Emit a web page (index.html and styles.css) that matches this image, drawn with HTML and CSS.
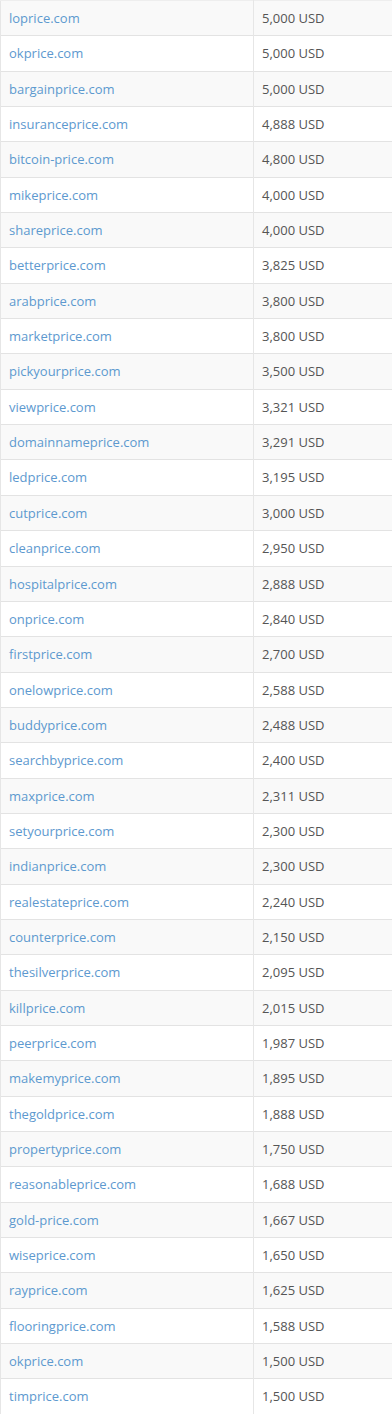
FILE: index.html
```html
<!DOCTYPE html>
<html>
<head>
<meta charset="utf-8">
<link rel="stylesheet" href="styles.css">
</head>
<body>
<table class="prices">
<tbody>
<tr><td class="dom"><a href="#">loprice.com</a></td><td class="amt">5,000 USD</td></tr>
<tr><td class="dom"><a href="#">okprice.com</a></td><td class="amt">5,000 USD</td></tr>
<tr><td class="dom"><a href="#">bargainprice.com</a></td><td class="amt">5,000 USD</td></tr>
<tr><td class="dom"><a href="#">insuranceprice.com</a></td><td class="amt">4,888 USD</td></tr>
<tr><td class="dom"><a href="#">bitcoin-price.com</a></td><td class="amt">4,800 USD</td></tr>
<tr><td class="dom"><a href="#">mikeprice.com</a></td><td class="amt">4,000 USD</td></tr>
<tr><td class="dom"><a href="#">shareprice.com</a></td><td class="amt">4,000 USD</td></tr>
<tr><td class="dom"><a href="#">betterprice.com</a></td><td class="amt">3,825 USD</td></tr>
<tr><td class="dom"><a href="#">arabprice.com</a></td><td class="amt">3,800 USD</td></tr>
<tr><td class="dom"><a href="#">marketprice.com</a></td><td class="amt">3,800 USD</td></tr>
<tr><td class="dom"><a href="#">pickyourprice.com</a></td><td class="amt">3,500 USD</td></tr>
<tr><td class="dom"><a href="#">viewprice.com</a></td><td class="amt">3,321 USD</td></tr>
<tr><td class="dom"><a href="#">domainnameprice.com</a></td><td class="amt">3,291 USD</td></tr>
<tr><td class="dom"><a href="#">ledprice.com</a></td><td class="amt">3,195 USD</td></tr>
<tr><td class="dom"><a href="#">cutprice.com</a></td><td class="amt">3,000 USD</td></tr>
<tr><td class="dom"><a href="#">cleanprice.com</a></td><td class="amt">2,950 USD</td></tr>
<tr><td class="dom"><a href="#">hospitalprice.com</a></td><td class="amt">2,888 USD</td></tr>
<tr><td class="dom"><a href="#">onprice.com</a></td><td class="amt">2,840 USD</td></tr>
<tr><td class="dom"><a href="#">firstprice.com</a></td><td class="amt">2,700 USD</td></tr>
<tr><td class="dom"><a href="#">onelowprice.com</a></td><td class="amt">2,588 USD</td></tr>
<tr><td class="dom"><a href="#">buddyprice.com</a></td><td class="amt">2,488 USD</td></tr>
<tr><td class="dom"><a href="#">searchbyprice.com</a></td><td class="amt">2,400 USD</td></tr>
<tr><td class="dom"><a href="#">maxprice.com</a></td><td class="amt">2,311 USD</td></tr>
<tr><td class="dom"><a href="#">setyourprice.com</a></td><td class="amt">2,300 USD</td></tr>
<tr><td class="dom"><a href="#">indianprice.com</a></td><td class="amt">2,300 USD</td></tr>
<tr><td class="dom"><a href="#">realestateprice.com</a></td><td class="amt">2,240 USD</td></tr>
<tr><td class="dom"><a href="#">counterprice.com</a></td><td class="amt">2,150 USD</td></tr>
<tr><td class="dom"><a href="#">thesilverprice.com</a></td><td class="amt">2,095 USD</td></tr>
<tr><td class="dom"><a href="#">killprice.com</a></td><td class="amt">2,015 USD</td></tr>
<tr><td class="dom"><a href="#">peerprice.com</a></td><td class="amt">1,987 USD</td></tr>
<tr><td class="dom"><a href="#">makemyprice.com</a></td><td class="amt">1,895 USD</td></tr>
<tr><td class="dom"><a href="#">thegoldprice.com</a></td><td class="amt">1,888 USD</td></tr>
<tr><td class="dom"><a href="#">propertyprice.com</a></td><td class="amt">1,750 USD</td></tr>
<tr><td class="dom"><a href="#">reasonableprice.com</a></td><td class="amt">1,688 USD</td></tr>
<tr><td class="dom"><a href="#">gold-price.com</a></td><td class="amt">1,667 USD</td></tr>
<tr><td class="dom"><a href="#">wiseprice.com</a></td><td class="amt">1,650 USD</td></tr>
<tr><td class="dom"><a href="#">rayprice.com</a></td><td class="amt">1,625 USD</td></tr>
<tr><td class="dom"><a href="#">flooringprice.com</a></td><td class="amt">1,588 USD</td></tr>
<tr><td class="dom"><a href="#">okprice.com</a></td><td class="amt">1,500 USD</td></tr>
<tr><td class="dom"><a href="#">timprice.com</a></td><td class="amt">1,500 USD</td></tr>
</tbody>
</table>
</body>
</html>
```

FILE: styles.css
```css
html, body {
  margin: 0;
  padding: 0;
  background: #ffffff;
}
body {
  font-family: "Open Sans", "Liberation Sans", sans-serif;
  font-size: 13px;
  color: #555555;
}
.prices {
  width: 392px;
  border-collapse: collapse;
  border-spacing: 0;
  table-layout: fixed;
}
.prices td {
  padding: 8px 8px 8px 8px;
  height: 18.35px;
  line-height: 18.35px;
  border-top: 1px solid #e3e3e3;
  white-space: nowrap;
  vertical-align: middle;
}
.prices tr:first-child td {
  border-top-color: #eeeeee;
}
.prices tr:nth-child(odd) td {
  background: #f9f9f9;
}
.prices .dom {
  width: 236px;
  border-left: 1px solid #e6e6e6;
  border-right: 1px solid #e6e6e6;
}
.prices .amt {
  color: #555555;
}
.prices a {
  color: #5d99cf;
  text-decoration: none;
}
```
